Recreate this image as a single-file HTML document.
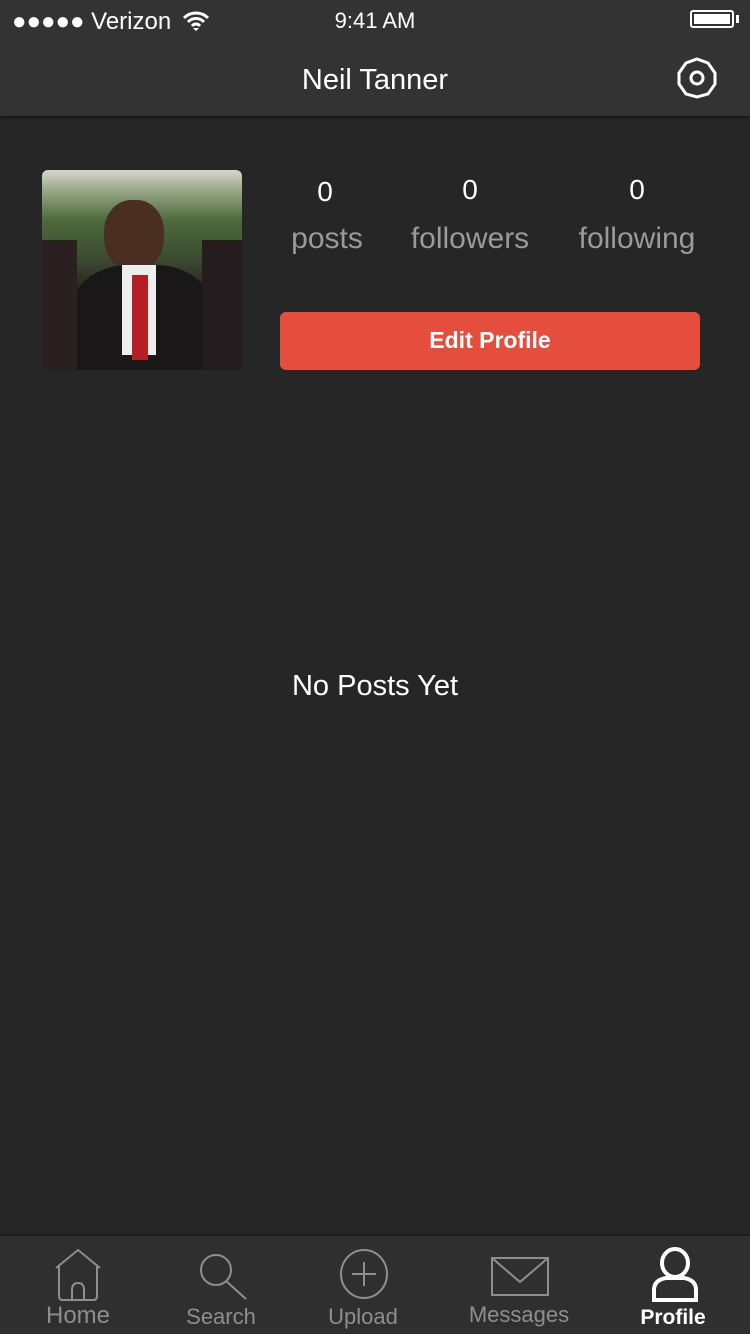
<!DOCTYPE html>
<html><head><meta charset="utf-8"><style>
*{margin:0;padding:0;box-sizing:border-box}
body{width:750px;height:1334px;background:#262626;font-family:"Liberation Sans",sans-serif;position:relative;overflow:hidden;color:#fff}
.top{position:absolute;left:0;top:0;width:750px;height:116px;background:#333;box-shadow:0 2px 3px rgba(0,0,0,.4)}
.abs{position:absolute}
.tab{position:absolute;left:0;top:1234px;width:750px;height:100px;background:#2f2f2f;border-top:2px solid #1e1e1e}
.lbl{position:absolute;font-size:22px;color:#8e8e8e;text-align:center;width:150px}
</style></head><body>
<div class="top">
 <div class="abs" style="left:12px;top:8px;font-size:24px;">●●●●● Verizon</div>
 <svg class="abs" style="left:182px;top:10px" width="28" height="22" viewBox="0 0 28 22"><path d="M2 8a17 17 0 0 1 24 0M6 12a11 11 0 0 1 16 0M10 16a5 5 0 0 1 8 0" stroke="#fff" stroke-width="3" fill="none"/><path d="M11 18l3 3 3-3z" fill="#fff"/></svg>
 <div class="abs" style="left:0;width:750px;top:8px;text-align:center;font-size:22px">9:41 AM</div>
 <div class="abs" style="left:690px;top:10px;width:44px;height:18px;border:2px solid #fff;border-radius:3px;padding:2px"><div style="background:#fff;width:100%;height:100%"></div></div>
 <div class="abs" style="left:736px;top:15px;width:3px;height:8px;background:#fff"></div>
 <div class="abs" style="left:0;width:750px;top:64px;text-align:center;font-size:29px">Neil Tanner</div>
 <svg class="abs" style="left:675px;top:56px" width="44" height="44" viewBox="0 0 44 44"><polygon points="22,3 33,7 40,17 40,28 33,38 22,41 11,38 4,28 4,17 11,7" fill="none" stroke="#fff" stroke-width="3"/><circle cx="22" cy="22" r="6" fill="none" stroke="#fff" stroke-width="3"/></svg>
</div>
<div class="abs" style="left:42px;top:170px;width:200px;height:200px;border-radius:6px;overflow:hidden;background:linear-gradient(#d8d6cc 0,#9aa88a 10%,#4d6b3a 25%,#3b4a30 45%,#2a2320 60%,#1e1a1a 100%)">
 <div class="abs" style="left:62px;top:30px;width:60px;height:70px;border-radius:45%;background:#4a2e22"></div>
 <div class="abs" style="left:30px;top:95px;width:140px;height:110px;border-radius:40% 40% 0 0;background:#1a1718"></div>
 <div class="abs" style="left:80px;top:95px;width:34px;height:90px;background:#eee"></div>
 <div class="abs" style="left:90px;top:105px;width:16px;height:85px;background:#b51e22"></div>
 <div class="abs" style="left:0;top:70px;width:35px;height:130px;background:#2a2020"></div>
 <div class="abs" style="left:160px;top:70px;width:40px;height:130px;background:#241c1e"></div>
</div>
<div class="abs" style="left:275px;top:176px;width:100px;text-align:center;font-size:28px">0</div>
<div class="abs" style="left:420px;top:174px;width:100px;text-align:center;font-size:28px">0</div>
<div class="abs" style="left:587px;top:174px;width:100px;text-align:center;font-size:28px">0</div>
<div class="abs" style="left:277px;top:222px;width:100px;text-align:center;font-size:30px;color:#9a9a9a">posts</div>
<div class="abs" style="left:400px;top:222px;width:140px;text-align:center;font-size:30px;color:#9a9a9a">followers</div>
<div class="abs" style="left:567px;top:222px;width:140px;text-align:center;font-size:30px;color:#9a9a9a">following</div>
<div class="abs" style="left:280px;top:312px;width:420px;height:58px;background:#e54d3c;border-radius:6px;text-align:center;line-height:56px;font-size:23px;font-weight:bold">Edit Profile</div>
<div class="abs" style="left:0;width:750px;top:670px;text-align:center;font-size:29px">No Posts Yet</div>
<div class="tab">
 <svg class="abs" style="left:52px;top:12px" width="52" height="56" viewBox="0 0 52 56" fill="none" stroke="#8e8e8e" stroke-width="2"><path d="M4 20L26 2 48 20M7 18v30q0 4 4 4h30q4 0 4-4V18M20 52V42q0-7 6-7t6 7v10"/></svg>
 <svg class="abs" style="left:196px;top:16px" width="54" height="50" viewBox="0 0 54 50" fill="none" stroke="#8e8e8e" stroke-width="2"><circle cx="20" cy="18" r="15"/><path d="M30 29l20 18"/></svg>
 <svg class="abs" style="left:337px;top:12px" width="54" height="54" viewBox="0 0 54 54" fill="none" stroke="#8e8e8e" stroke-width="2"><ellipse cx="27" cy="26" rx="23" ry="24"/><path d="M27 14v24M15 26h24"/></svg>
 <svg class="abs" style="left:490px;top:20px" width="60" height="42" viewBox="0 0 60 42" fill="none" stroke="#8e8e8e" stroke-width="2"><rect x="2" y="2" width="56" height="37"/><path d="M2 2l28 24 28-24"/></svg>
 <svg class="abs" style="left:648px;top:10px" width="54" height="58" viewBox="0 0 54 58" fill="none" stroke="#fff" stroke-width="4"><ellipse cx="27" cy="17" rx="13" ry="14"/><path d="M6 54V44q0-10 12-12h18q12 2 12 12v10z"/></svg>
 <div class="lbl" style="left:3px;top:66px;font-size:24px">Home</div>
 <div class="lbl" style="left:146px;top:68px">Search</div>
 <div class="lbl" style="left:288px;top:68px">Upload</div>
 <div class="lbl" style="left:444px;top:66px">Messages</div>
 <div class="lbl" style="left:598px;top:70px;color:#fff;font-weight:bold;font-size:21px">Profile</div>
</div>
</body></html>
